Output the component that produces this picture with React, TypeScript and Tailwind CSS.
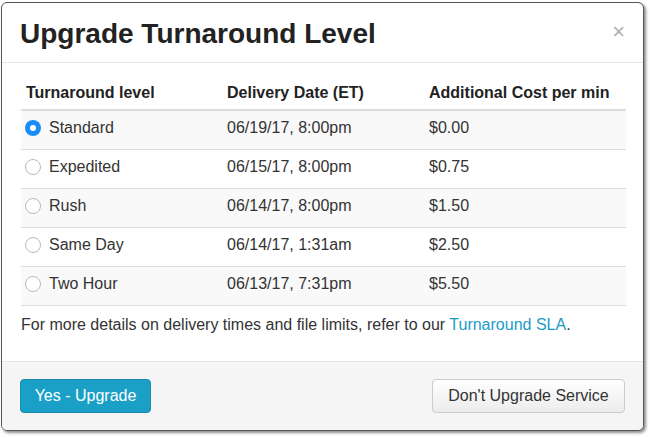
import React from 'react';

type Level = { name: string; date: string; cost: string };

const levels: Level[] = [
  { name: 'Standard', date: '06/19/17, 8:00pm', cost: '$0.00' },
  { name: 'Expedited', date: '06/15/17, 8:00pm', cost: '$0.75' },
  { name: 'Rush', date: '06/14/17, 8:00pm', cost: '$1.50' },
  { name: 'Same Day', date: '06/14/17, 1:31am', cost: '$2.50' },
  { name: 'Two Hour', date: '06/13/17, 7:31pm', cost: '$5.50' },
];

const Radio: React.FC<{ checked: boolean }> = ({ checked }) =>
  checked ? (
    <span className="w-[16px] h-[16px] rounded-full bg-[#1b8cf7] flex items-center justify-center shrink-0">
      <span className="w-[6px] h-[6px] rounded-full bg-white"></span>
    </span>
  ) : (
    <span className="w-[16px] h-[16px] rounded-full bg-white border border-[#b9b9b9] shrink-0"></span>
  );

const App: React.FC = () => {
  return (
    <div className="w-[650px] h-[438px] bg-white pt-[2px] pl-[1px] font-['Liberation_Sans',Arial,sans-serif] text-[#333]">
      <div className="w-[643px] h-[429px] bg-white rounded-[6px] border border-[#555] shadow-[2px_2px_3px_rgba(0,0,0,0.45)] overflow-hidden flex flex-col">
        <div className="h-[60px] border-b border-[#e5e5e5] flex items-center justify-between pl-[18px] pr-[18px] shrink-0">
          <h1 className="text-[28px] font-bold text-[#222] pt-[2px]">Upgrade Turnaround Level</h1>
          <span className="text-[22px] text-[#b0b0b0] leading-none pb-[2px]">×</span>
        </div>

        <div className="px-[19px] pt-[18px] flex-1">
          <table className="w-[605px] text-[16px] border-collapse">
            <thead>
              <tr className="h-[29px] border-b-2 border-[#ddd]">
                <th className="text-left font-bold text-[#222] pl-[5px] w-[206px] align-top">Turnaround level</th>
                <th className="text-left font-bold text-[#222] w-[202px] align-top">Delivery Date (ET)</th>
                <th className="text-left font-bold text-[#222] align-top">Additional Cost per min</th>
              </tr>
            </thead>
            <tbody>
              {levels.map((l, i) => (
                <tr key={l.name} className={`h-[39px] border-b border-[#ddd] ${i % 2 === 0 ? 'bg-[#f9f9f9]' : 'bg-white'}`}>
                  <td className="pl-[4px] pb-[4px]">
                    <div className="flex items-center gap-[8px]">
                      <Radio checked={i === 0} />
                      <span>{l.name}</span>
                    </div>
                  </td>
                  <td className="pb-[3px]">{l.date}</td>
                  <td className="pb-[3px]">{l.cost}</td>
                </tr>
              ))}
            </tbody>
          </table>
          <p className="text-[16px] mt-[7px]">
            For more details on delivery times and file limits, refer to our{' '}
            <span className="text-[#1a9cc6]">Turnaround SLA</span>.
          </p>
        </div>

        <div className="h-[69px] bg-[#f5f5f5] border-t border-[#e5e5e5] flex items-center justify-between pl-[18px] pr-[18px] shrink-0">
          <button className="h-[34px] w-[131px] rounded-[4px] bg-[#1a9fc7] border border-[#178eb2] text-white text-[16px]">
            Yes - Upgrade
          </button>
          <button className="h-[34px] w-[193px] rounded-[4px] bg-gradient-to-b from-white to-[#ececec] border border-[#ccc] text-[#333] text-[16px]">
            Don't Upgrade Service
          </button>
        </div>
      </div>
    </div>
  );
};

export default App;
